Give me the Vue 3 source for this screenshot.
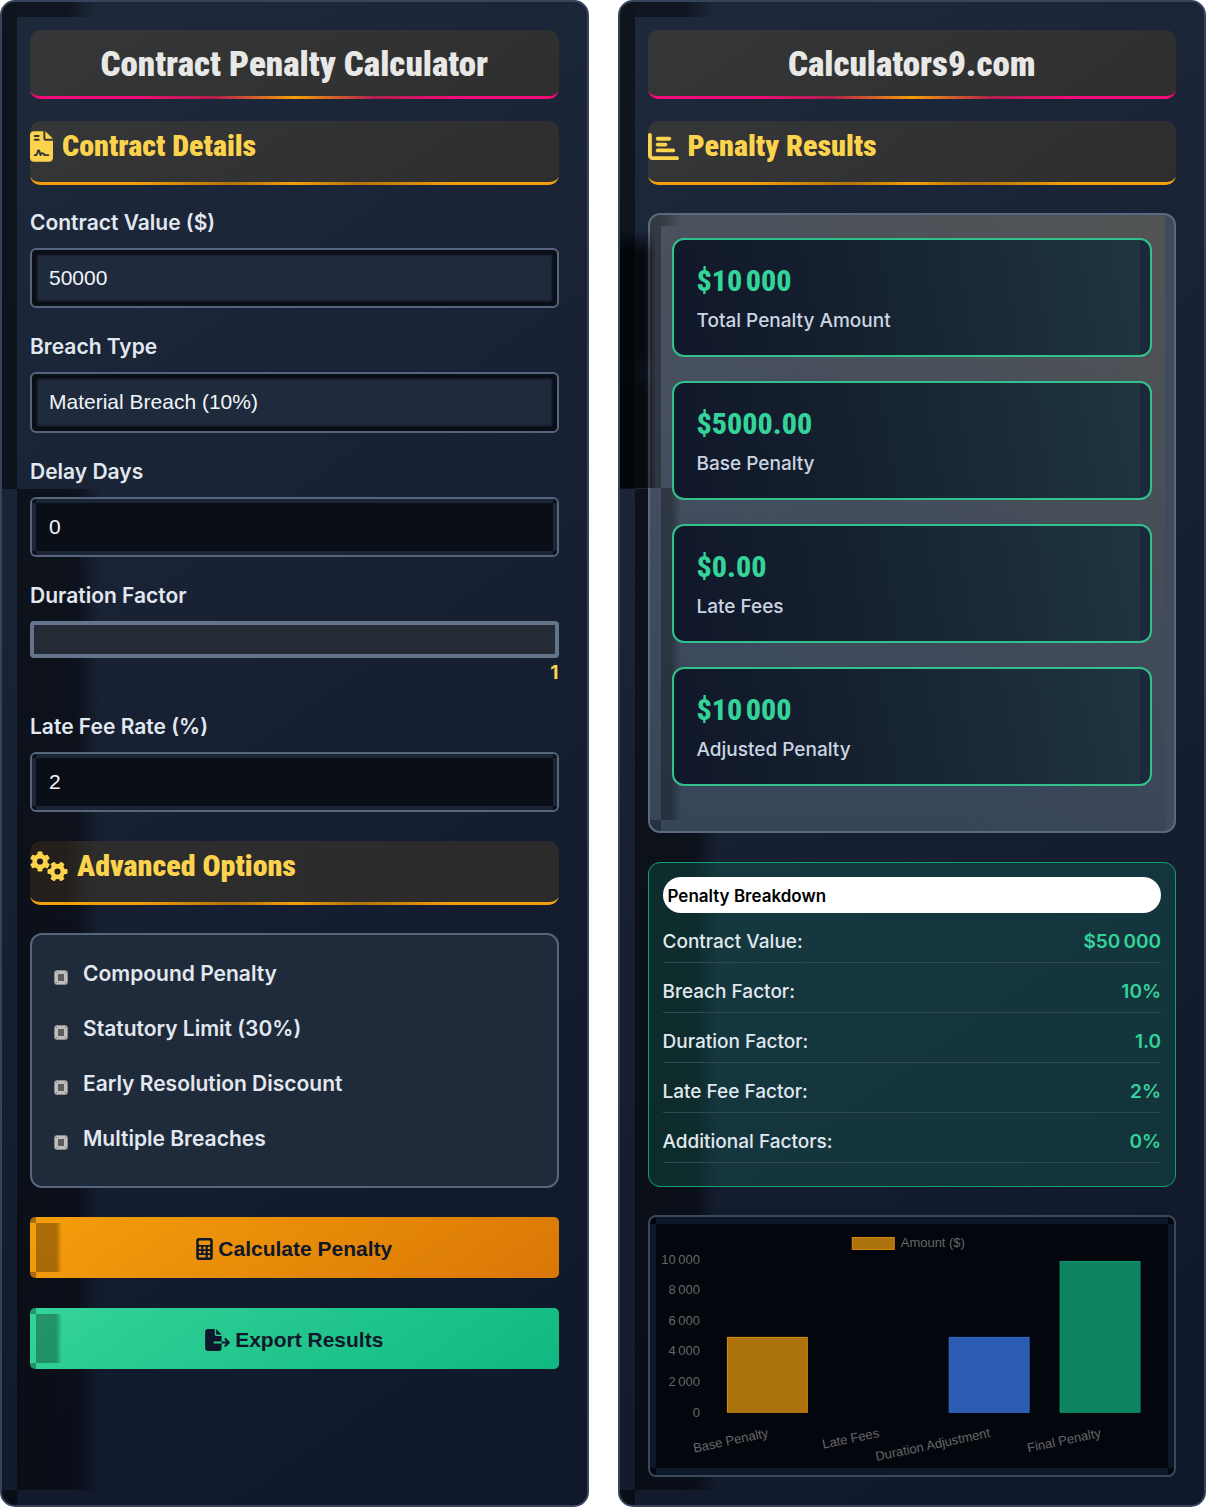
<script setup>
import { ref } from 'vue'

const contractValue = ref(50000)
const breachType = ref('material')
const delayDays = ref(0)
const durationFactor = ref(1)
const lateFeeRate = ref(2)

const options = ref([
  { id: 'compound', label: 'Compound Penalty', checked: false },
  { id: 'statutory', label: 'Statutory Limit (30%)', checked: false },
  { id: 'early', label: 'Early Resolution Discount', checked: false },
  { id: 'multiple', label: 'Multiple Breaches', checked: false },
])

const metrics = [
  { value: '$10\u202f000', label: 'Total Penalty Amount' },
  { value: '$5000.00', label: 'Base Penalty' },
  { value: '$0.00', label: 'Late Fees' },
  { value: '$10\u202f000', label: 'Adjusted Penalty' },
]

const breakdown = [
  { label: 'Contract Value:', value: '$50\u202f000' },
  { label: 'Breach Factor:', value: '10%' },
  { label: 'Duration Factor:', value: '1.0' },
  { label: 'Late Fee Factor:', value: '2%' },
  { label: 'Additional Factors:', value: '0%' },
]

const ticks = [
  { label: '10\u202f000', y: 47 },
  { label: '8\u202f000', y: 77 },
  { label: '6\u202f000', y: 108 },
  { label: '4\u202f000', y: 138 },
  { label: '2\u202f000', y: 169 },
  { label: '0', y: 200 },
]

const bars = [
  { label: 'Base Penalty', x: 77, height: 76, fill: '#ac720b', stroke: '#d98c0c' },
  { label: 'Late Fees', x: 188, height: 0, fill: 'none', stroke: 'none' },
  { label: 'Duration Adjustment', x: 299, height: 76, fill: '#2b5cb1', stroke: '#3268c8' },
  { label: 'Final Penalty', x: 410, height: 152, fill: '#0d835f', stroke: '#0e946a' },
]

const teeth = [0, 60, 120, 180, 240, 300]
</script>

<template>
  <main class="page">
    <section class="panel">
      <h1 class="title">Contract Penalty Calculator</h1>

      <h2 class="heading">
        <svg class="icon-file" viewBox="0 0 384 512" aria-hidden="true">
          <path d="M64 0C28.7 0 0 28.7 0 64V448c0 35.3 28.7 64 64 64H320c35.3 0 64-28.7 64-64V160H256c-17.7 0-32-14.3-32-32V0H64zM256 0V128H384L256 0zM80 64h64c8.8 0 16 7.2 16 16s-7.2 16-16 16H80c-8.8 0-16-7.2-16-16s7.2-16 16-16zm0 64h64c8.8 0 16 7.2 16 16s-7.2 16-16 16H80c-8.8 0-16-7.2-16-16s7.2-16 16-16zm54.2 253.8c-6.1 20.3-24.8 34.2-46 34.2H80c-8.8 0-16-7.2-16-16s7.2-16 16-16h8.2c7.1 0 13.3-4.6 15.3-11.4l14.9-49.5c3.4-11.3 13.8-19.1 25.6-19.1s22.2 7.7 25.6 19.1l11.6 38.6c7.4-6.2 16.8-9.7 26.8-9.7c15.9 0 30.4 9 37.5 23.2l4.4 8.8H304c8.8 0 16 7.2 16 16s-7.2 16-16 16H240c-6.1 0-11.6-3.4-14.3-8.8l-8.8-17.7c-1.7-3.4-5.1-5.5-8.8-5.5s-7.2 2.1-8.8 5.5l-8.8 17.7c-2.9 5.9-9.2 9.4-15.7 8.8s-12.1-5.1-13.9-11.3L144 349l-9.8 32.8z" />
        </svg>
        Contract Details
      </h2>

      <div class="group">
        <label for="contract-value">Contract Value ($)</label>
        <input id="contract-value" v-model="contractValue" class="field" type="text" inputmode="numeric">
      </div>
      <div class="group">
        <label for="breach-type">Breach Type</label>
        <select id="breach-type" v-model="breachType" class="field">
          <option value="material">Material Breach (10%)</option>
        </select>
      </div>
      <div class="group">
        <label for="delay-days">Delay Days</label>
        <input id="delay-days" v-model="delayDays" class="field dark" type="text" inputmode="numeric">
      </div>
      <div class="group">
        <label for="duration">Duration Factor</label>
        <input id="duration" v-model="durationFactor" class="range" type="range" min="1" max="3" step="0.1">
        <output class="range-value" for="duration">{{ durationFactor }}</output>
      </div>
      <div class="group">
        <label for="late-fee">Late Fee Rate (%)</label>
        <input id="late-fee" v-model="lateFeeRate" class="field dark" type="text" inputmode="numeric">
      </div>

      <h2 class="heading advanced">
        <svg class="icon-gears" viewBox="0 0 38 30" aria-hidden="true">
          <g transform="translate(10 10)">
            <circle r="5.4" />
            <rect v-for="a in teeth" :key="a" x="-2.5" y="-10" width="5" height="4" rx="1" :transform="`rotate(${a})`" />
          </g>
          <g transform="translate(27.5 20)">
            <circle r="5.4" />
            <rect v-for="a in teeth" :key="a" x="-2.5" y="-10" width="5" height="4" rx="1" :transform="`rotate(${a + 30})`" />
          </g>
        </svg>
        Advanced Options
      </h2>

      <div class="options">
        <div v-for="o in options" :key="o.id" class="option">
          <input :id="o.id" v-model="o.checked" type="checkbox">
          <label :for="o.id">{{ o.label }}</label>
        </div>
      </div>

      <div class="actions">
        <button type="button" class="calculate">
          <svg class="icon-calc" viewBox="0 0 384 512" aria-hidden="true">
            <path fill-rule="evenodd" d="M64 0H320a64 64 0 0 1 64 64V448a64 64 0 0 1-64 64H64a64 64 0 0 1-64-64V64A64 64 0 0 1 64 0zM80 56a24 24 0 0 0-24 24v56a24 24 0 0 0 24 24H304a24 24 0 0 0 24-24V80a24 24 0 0 0-24-24zM60 204h56v56H60zM164 204h56v56h-56zM268 204h56v56h-56zM60 300h56v56H60zM164 300h56v56h-56zM268 300h56v56h-56zM60 396H220v56H60zM268 396h56v56h-56z" />
          </svg>
          Calculate Penalty
        </button>
        <button type="button" class="export">
          <svg class="icon-export" viewBox="0 0 576 512" aria-hidden="true">
            <path d="M0 64C0 28.7 28.7 0 64 0H224V128c0 17.7 14.3 32 32 32H384V288H216c-13.3 0-24 10.7-24 24s10.7 24 24 24H384V448c0 35.3-28.7 64-64 64H64c-35.3 0-64-28.7-64-64V64zM384 336V288H494.1l-39-39c-9.4-9.4-9.4-24.6 0-33.9s24.6-9.4 33.9 0l80 80c9.4 9.4 9.4 24.6 0 33.9l-80 80c-9.4 9.4-24.6 9.4-33.9 0s-9.4-24.6 0-33.9l39-39H384zm0-208H256V0L384 128z" />
          </svg>
          Export Results
        </button>
      </div>
    </section>

    <section class="panel">
      <h1 class="title">Calculators9.com</h1>

      <h2 class="heading">
        <svg class="icon-chart" viewBox="0 0 512 512" aria-hidden="true">
          <path d="M32 32c17.7 0 32 14.3 32 32V400c0 8.8 7.2 16 16 16H480c17.7 0 32 14.3 32 32s-14.3 32-32 32H80c-44.2 0-80-35.8-80-80V64C0 46.3 14.3 32 32 32zm96 96c0-17.7 14.3-32 32-32l192 0c17.7 0 32 14.3 32 32s-14.3 32-32 32l-192 0c-17.7 0-32-14.3-32-32zm32 64H288c17.7 0 32 14.3 32 32s-14.3 32-32 32H160c-17.7 0-32-14.3-32-32s14.3-32 32-32zm0 96H416c17.7 0 32 14.3 32 32s-14.3 32-32 32H160c-17.7 0-32-14.3-32-32s14.3-32 32-32z" />
        </svg>
        Penalty Results
      </h2>

      <div class="results">
        <div v-for="m in metrics" :key="m.label" class="metric">
          <div class="metric-value">{{ m.value }}</div>
          <div class="metric-label">{{ m.label }}</div>
        </div>
      </div>

      <div class="breakdown">
        <h3>Penalty Breakdown</h3>
        <dl>
          <div v-for="row in breakdown" :key="row.label" class="row">
            <dt>{{ row.label }}</dt>
            <dd>{{ row.value }}</dd>
          </div>
        </dl>
      </div>

      <div class="chart">
        <svg viewBox="0 0 525 258" role="img" aria-label="Amount ($)">
          <rect x="202.5" y="20.5" width="42" height="12" fill="#ac720b" stroke="#d98c0c" />
          <text x="251" y="30">Amount ($)</text>
          <text v-for="t in ticks" :key="t.label" x="50" :y="t.y" text-anchor="end">{{ t.label }}</text>
          <g v-for="b in bars" :key="b.label">
            <rect :x="b.x" :y="196 - b.height" width="81" :height="b.height" :fill="b.stroke" />
            <rect v-if="b.height" :x="b.x + 1" :y="197 - b.height" width="79" :height="b.height - 1" :fill="b.fill" />
            <text text-anchor="end" :transform="`translate(${b.x + 42} 220) rotate(-12)`">{{ b.label }}</text>
          </g>
        </svg>
      </div>
    </section>
  </main>
</template>

<style>
body {
  margin: 0;
  background: #fff;
}
</style>

<style scoped>
* {
  box-sizing: border-box;
}
.page {
  display: grid;
  grid-template-columns: 1fr 1fr;
  gap: 29px;
  min-height: 100vh;
  font-family: Inter, "Liberation Sans", sans-serif;
  color: #e2e8f0;
}
.panel {
  padding: 28px;
  border: 2px solid #35445a;
  border-radius: 15px;
  background:
    linear-gradient(90deg, rgba(0, 0, 0, 0.45) 50px, transparent 80px) 15px 0 / 80px 15px no-repeat,
    linear-gradient(rgba(0, 0, 0, 0.5), rgba(0, 0, 0, 0.5)) 0 0 / 15px 487px no-repeat,
    linear-gradient(rgba(0, 0, 0, 0.5), rgba(0, 0, 0, 0.5)) 0 100% / 15px 15px no-repeat,
    linear-gradient(90deg, rgba(0, 0, 0, 0.5), rgba(0, 0, 0, 0.48) 60px, transparent 83px) 15px calc(100% - 15px) / 83px calc(100% - 502px) no-repeat,
    linear-gradient(145deg, #1e293b, #0f172a);
}
.title,
.heading {
  margin: 0;
  font-family: "Roboto Condensed", "Liberation Sans Narrow", Roboto, sans-serif;
  font-weight: 900;
  border-bottom: 3px solid transparent;
  border-radius: 10px;
}
.title {
  height: 69px;
  margin-bottom: 22px;
  font-size: 35px;
  line-height: 69px;
  text-align: center;
  color: #e8e8e6;
  background:
    linear-gradient(145deg, #353637, #2f2f2f) padding-box,
    linear-gradient(90deg, #f50a78 20%, #b0214c 35%, #f59e0b 50%, #b0214c 65%, #f50a78 80%) 0 100% / 100% 8px no-repeat border-box;
}
.heading {
  display: flex;
  align-items: flex-start;
  height: 64px;
  margin-bottom: 28px;
  padding-top: 4px;
  font-size: 30px;
  line-height: 42px;
  color: #fcd34d;
  background:
    linear-gradient(145deg, #353637, #2e2e2f) padding-box,
    linear-gradient(90deg, #f59e0b 20%, #b37309 38%, #f59e0b 50%, #b37309 62%, #f59e0b 80%) 0 100% / 100% 8px no-repeat border-box;
}
.heading.advanced {
  background:
    linear-gradient(90deg, #241f1a 35px, #2e2d2e 65px, #2c2a2b) padding-box,
    linear-gradient(90deg, #f59e0b 20%, #b37309 38%, #f59e0b 50%, #b37309 62%, #f59e0b 80%) 0 100% / 100% 8px no-repeat border-box;
}
.heading svg {
  height: 31px;
  margin: 6px 9px 0 0;
  fill: currentColor;
}
.icon-file {
  width: 23px;
}
.icon-chart {
  width: 31px;
}
.icon-gears {
  width: 38px;
}
.icon-gears circle {
  fill: none;
  stroke: currentColor;
  stroke-width: 4.6px;
}
.group {
  margin-bottom: 29px;
}
.group label {
  display: block;
  margin-bottom: 15px;
  font-size: 21px;
  font-weight: 600;
  line-height: 20px;
}
.field {
  display: block;
  width: 100%;
  height: 60px;
  margin: 0;
  padding: 0 17px;
  border: 2px solid #56657b;
  border-radius: 6px;
  appearance: none;
  outline: none;
  font-family: "Liberation Sans", sans-serif;
  font-size: 21px;
  color: #f1f5f9;
  background: #1f2a3c;
  box-shadow: inset 0 0 0 4px #0a0f17, inset 0 0 2px 5px #0a0f17;
}
select.field {
  height: 61px;
  padding-bottom: 2px;
}
.field.dark {
  background:
    linear-gradient(#0a0f17, #0a0f17) center / calc(100% - 8px) calc(100% - 8px) no-repeat,
    linear-gradient(#0a0f17, #0a0f17) 0 0 / 4px 4px no-repeat,
    linear-gradient(#0a0f17, #0a0f17) 100% 0 / 4px 4px no-repeat,
    linear-gradient(#0a0f17, #0a0f17) 0 100% / 4px 4px no-repeat,
    linear-gradient(#0a0f17, #0a0f17) 100% 100% / 4px 4px no-repeat,
    #1b2536;
  box-shadow: none;
}
.range {
  display: block;
  width: 100%;
  height: 37px;
  margin: 0;
  border: 4px solid #64748b;
  border-radius: 4px;
  appearance: none;
  background: #252b34;
}
.range::-webkit-slider-thumb {
  appearance: none;
  width: 1px;
  height: 1px;
}
.range-value {
  display: block;
  font-size: 19px;
  font-weight: 700;
  line-height: 30px;
  text-align: right;
  color: #fcd34d;
}
.options {
  display: grid;
  gap: 28px;
  margin-bottom: 29px;
  padding: 25px 22px 34px;
  border: 2px solid #56657b;
  border-radius: 12px;
  background: #1f2a3b;
}
.option {
  display: flex;
  align-items: center;
  gap: 15px;
  height: 27px;
  font-size: 21px;
  font-weight: 600;
}
.option input {
  width: 14px;
  height: 15px;
  margin: 8px 0 0;
  border: 1px solid #8d8b89;
  border-radius: 3px;
  appearance: none;
  background:
    linear-gradient(#5c5c5c, #5c5c5c) center / 6px 7px no-repeat,
    linear-gradient(#777, #777) 1px 1px / 1px 1px no-repeat,
    linear-gradient(#777, #777) 10px 1px / 1px 1px no-repeat,
    linear-gradient(#777, #777) 1px 11px / 1px 1px no-repeat,
    linear-gradient(#777, #777) 10px 11px / 1px 1px no-repeat,
    #bfbdbb;
}
.actions {
  display: grid;
  gap: 30px;
}
button {
  display: flex;
  align-items: center;
  justify-content: center;
  gap: 5px;
  height: 61px;
  padding: 2px 0 0;
  border: 0;
  border-radius: 5px;
  font-family: "Liberation Sans", sans-serif;
  font-size: 21px;
  font-weight: 700;
  color: #0f172a;
}
button svg {
  fill: currentColor;
}
.icon-calc {
  width: 17px;
  height: 22px;
}
.icon-export {
  width: 25px;
  height: 22px;
}
.calculate {
  background:
    linear-gradient(90deg, rgba(0, 0, 0, 0.3) 20px, transparent) 6px 50% / 26px 49px no-repeat,
    linear-gradient(rgba(0, 0, 0, 0.3), rgba(0, 0, 0, 0.3)) 0 0 / 6px 6px no-repeat,
    linear-gradient(rgba(0, 0, 0, 0.3), rgba(0, 0, 0, 0.3)) 0 100% / 6px 6px no-repeat,
    linear-gradient(145deg, #f59e0b, #d97706);
}
.export {
  background:
    linear-gradient(90deg, rgba(0, 0, 0, 0.3) 20px, transparent) 6px 50% / 26px 49px no-repeat,
    linear-gradient(rgba(0, 0, 0, 0.3), rgba(0, 0, 0, 0.3)) 0 0 / 6px 6px no-repeat,
    linear-gradient(rgba(0, 0, 0, 0.3), rgba(0, 0, 0, 0.3)) 0 100% / 6px 6px no-repeat,
    linear-gradient(145deg, #34d399, #10b981);
}
.results {
  position: relative;
  display: grid;
  gap: 24px;
  margin-bottom: 29px;
  padding: 23px 22px 45px;
  border: 2px solid #5a6980;
  border-radius: 12px;
  background:
    linear-gradient(90deg, rgba(0, 0, 0, 0.3), transparent) 11px 0 / 20px 11px no-repeat,
    linear-gradient(rgba(0, 0, 0, 0.3), rgba(0, 0, 0, 0.3)) 0 0 / 11px 273px no-repeat,
    linear-gradient(rgba(0, 0, 0, 0.3), rgba(0, 0, 0, 0.3)) 0 100% / 11px 11px no-repeat,
    linear-gradient(90deg, rgba(0, 0, 0, 0.3) 10px, transparent) 11px 273px / 20px 332px no-repeat,
    linear-gradient(90deg, transparent calc(100% - 9px), #3e4a5d calc(100% - 9px)),
    linear-gradient(220deg, rgba(84, 83, 78, 0.8), rgba(72, 74, 80, 0.35) 45%, transparent 75%),
    linear-gradient(#4b5667, #374559);
}
.results::before {
  content: "";
  position: absolute;
  top: 16px;
  left: -30px;
  width: 35px;
  height: 257px;
  background: linear-gradient(90deg, rgba(0, 0, 0, 0.72) 24px, rgba(0, 0, 0, 0.1));
  mask-image: linear-gradient(transparent, #000 20px, #000 125px, #000c 140px, #000c 145px, #000 158px);
}
.metric {
  padding: 21px 23px 20px;
  border: 2px solid #30c18d;
  border-radius: 12px;
  background:
    linear-gradient(90deg, transparent calc(100% - 10px), #1b293a calc(100% - 10px)),
    linear-gradient(80deg, #10172a, #15202f 35%, #1f3640);
}
.metric-value {
  margin-bottom: 5px;
  font-family: "Roboto Condensed", "Liberation Sans Narrow", Roboto, sans-serif;
  font-size: 30px;
  font-weight: 800;
  line-height: 40px;
  color: #34d399;
}
.metric-label {
  font-size: 19px;
  font-weight: 500;
  line-height: 29px;
  color: #cbd5e1;
}
.breakdown {
  margin-bottom: 28px;
  padding: 14px 14px 23px;
  border: 1px solid #10a173;
  border-radius: 12px;
  background: rgba(18, 128, 98, 0.25);
}
.breakdown h3 {
  height: 36px;
  margin: 0;
  padding: 0 5px;
  border-radius: 18px;
  font-size: 17px;
  font-weight: 600;
  line-height: 38px;
  color: #000;
  background: #fff;
}
.breakdown dl {
  margin: 0;
}
.row {
  display: flex;
  justify-content: space-between;
  padding: 14px 0 6px;
  border-bottom: 1px solid #304754;
  font-size: 19px;
  line-height: 29px;
}
.row dt {
  font-weight: 500;
}
.row dd {
  margin: 0;
  font-weight: 600;
  color: #34d399;
}
.chart {
  border: 2px solid #3b495d;
  border-radius: 8px;
  background:
    linear-gradient(#03060d, #03060d) center / calc(100% - 12px) calc(100% - 14px) no-repeat,
    linear-gradient(#03060d, #03060d) 0 0 / 6px 7px no-repeat,
    linear-gradient(#03060d, #03060d) 100% 0 / 6px 7px no-repeat,
    linear-gradient(#03060d, #03060d) 0 100% / 6px 7px no-repeat,
    linear-gradient(#03060d, #03060d) 100% 100% / 6px 7px no-repeat,
    #0f172a;
}
.chart svg {
  display: block;
  width: 100%;
  font-family: "Liberation Sans", sans-serif;
  font-size: 13px;
  fill: #666;
}
</style>
